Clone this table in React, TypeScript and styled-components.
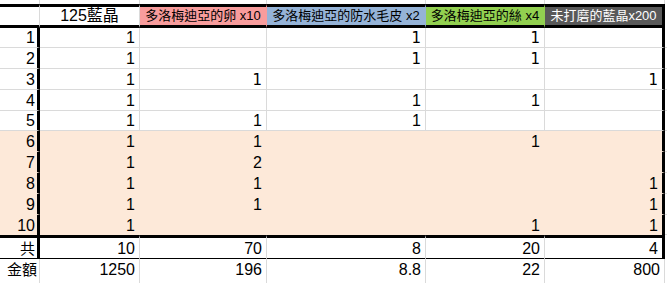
import React from "react";
import styled, { createGlobalStyle } from "styled-components";

const GlobalStyle = createGlobalStyle`
  html, body {
    margin: 0;
    padding: 0;
    background: #fff;
    overflow: hidden;
  }
  body {
    font-family: "Liberation Sans", "Noto Sans CJK TC", sans-serif;
    color: #000;
  }
`;

const GRID = "#dadada";
const PEACH = "#fde9d9";
const COLUMNS = "40px 100px 127px 159px 119px 120px 1fr";

type Edge = "grid" | "thick" | "fill" | "none";

const Sheet = styled.div`
  width: 667px;
  height: 283px;
  display: flex;
  flex-direction: column;
`;

const Row = styled.div<{ $h: number }>`
  display: grid;
  grid-template-columns: ${COLUMNS};
  height: ${(p) => p.$h}px;
  flex: none;
`;

const Stub = styled.div`
  display: grid;
  grid-template-columns: ${COLUMNS};
  flex: 1;
`;

function edge(kind: Edge | undefined, bg: string) {
  switch (kind) {
    case "thick":
      return "3px solid #000";
    case "grid":
      return `1px solid ${GRID}`;
    case "fill":
      return `1px solid ${bg}`;
    default:
      return "0";
  }
}

const Cell = styled.div<{
  $bg?: string;
  $r?: Edge;
  $b?: Edge;
  $boxed?: boolean;
  $center?: boolean;
  $pad?: number;
}>`
  box-sizing: border-box;
  display: flex;
  align-items: ${(p) => (p.$center ? "center" : "flex-end")};
  justify-content: ${(p) => (p.$center ? "center" : "flex-end")};
  padding: 0 ${(p) => p.$pad ?? 4}px 0 0;
  background: ${(p) => p.$bg || "#fff"};
  border-right: ${(p) => edge(p.$r, p.$bg || "#fff")};
  border-bottom: ${(p) => edge(p.$boxed ? "thick" : p.$b, p.$bg || "#fff")};
  border-top: ${(p) => (p.$boxed ? "3px solid #000" : "0")};
  white-space: nowrap;
  overflow: visible;
  min-width: 0;
`;

const Value = styled.span<{ $small?: boolean }>`
  font-family: ${(p) =>
    p.$small ? '"DejaVu Sans", sans-serif' : '"Liberation Sans", sans-serif'};
  font-size: ${(p) => (p.$small ? 15 : 16)}px;
  line-height: ${(p) => (p.$small ? 18 : 19)}px;
  color: #000;
`;

const Label = styled.span`
  font-family: "Noto Sans CJK TC", sans-serif;
  font-size: 15px;
  line-height: 20px;
`;

const HeadText = styled.span<{ $light?: boolean; $big?: boolean }>`
  font-family: "Liberation Sans", "Noto Sans CJK TC", sans-serif;
  font-size: ${(p) => (p.$big ? 16 : 13)}px;
  line-height: 18px;
  color: ${(p) => (p.$light ? "#fff" : "#000")};
`;

const headers = [
  { text: "多洛梅迪亞的卵 x10", bg: "#f89c9c" },
  { text: "多洛梅迪亞的防水毛皮 x2", bg: "#95b3d7" },
  { text: "多洛梅迪亞的絲 x4", bg: "#92d050" },
  { text: "未打磨的藍晶x200", bg: "#595959", light: true },
];

// "s" marks the smaller, differently rendered entries
const body: string[][] = [
  ["1", "", "1s", "1s", ""],
  ["1", "", "1s", "1s", ""],
  ["1", "1s", "", "", "1s"],
  ["1", "", "1", "1", ""],
  ["1", "1", "1", "", ""],
  ["1", "1", "", "1", ""],
  ["1", "2", "", "", ""],
  ["1", "1", "", "", "1"],
  ["1", "1", "", "", "1"],
  ["1", "", "", "1", "1"],
];

const heights = [20, 21, 21, 21, 20, 21, 21, 21, 21, 20];

const totals = ["10", "70", "8", "20", "4"];
const amounts = ["1250", "196", "8.8", "22", "800"];

function renderValue(v: string) {
  if (!v) return null;
  const small = v.endsWith("s");
  return <Value $small={small}>{small ? v.slice(0, -1) : v}</Value>;
}

export default function App() {
  return (
    <Sheet>
      <GlobalStyle />

      <Row $h={4}>
        {Array.from({ length: 6 }).map((_, i) => (
          <Cell key={i} $r="grid" />
        ))}
        <Cell />
      </Row>

      <Row $h={24}>
        <Cell $r="grid" $boxed />
        <Cell $r="grid" $boxed $center $pad={0}>
          <HeadText $big>125藍晶</HeadText>
        </Cell>
        {headers.map((h, i) => (
          <Cell
            key={h.text}
            $bg={h.bg}
            $r={i === headers.length - 1 ? "thick" : "fill"}
            $boxed
            $center
            $pad={0}
          >
            <HeadText $light={h.light}>{h.text}</HeadText>
          </Cell>
        ))}
        <Cell />
      </Row>

      {body.map((cols, r) => {
        const peach = r >= 5;
        const bg = peach ? PEACH : undefined;
        const inner: Edge = peach ? "fill" : "grid";
        const bottom: Edge = r === body.length - 1 ? "none" : inner;
        return (
          <Row key={r} $h={heights[r]}>
            <Cell $bg={bg} $r="thick" $b={bottom} $pad={2}>
              <Value>{r + 1}</Value>
            </Cell>
            {cols.map((v, c) => (
              <Cell
                key={c}
                $bg={bg}
                $r={c === cols.length - 1 ? "thick" : inner}
                $b={bottom}
              >
                {renderValue(v)}
              </Cell>
            ))}
            <Cell $b="grid" />
          </Row>
        );
      })}

      <Row $h={24}>
        <Cell $r="thick" $boxed $pad={2}>
          <Label>共</Label>
        </Cell>
        {totals.map((v, c) => (
          <Cell key={c} $r={c === totals.length - 1 ? "thick" : "grid"} $boxed>
            <Value>{v}</Value>
          </Cell>
        ))}
        <Cell />
      </Row>

      <Row $h={20}>
        <Cell $r="grid" $b="grid" $pad={2}>
          <Label>金額</Label>
        </Cell>
        {amounts.map((v, c) => (
          <Cell key={c} $r="grid" $b="grid">
            <Value>{v}</Value>
          </Cell>
        ))}
        <Cell $b="grid" />
      </Row>

      <Stub>
        {Array.from({ length: 6 }).map((_, i) => (
          <Cell key={i} $r="grid" />
        ))}
        <Cell />
      </Stub>
    </Sheet>
  );
}
